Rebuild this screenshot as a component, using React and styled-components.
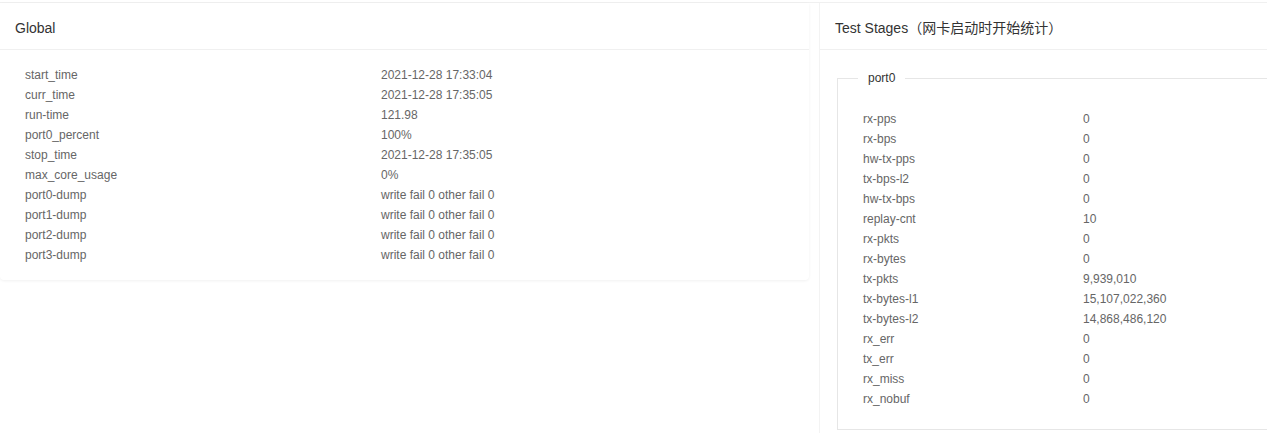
import styled, { createGlobalStyle } from "styled-components";

const globalRows = [
  ["start_time", "2021-12-28 17:33:04"],
  ["curr_time", "2021-12-28 17:35:05"],
  ["run-time", "121.98"],
  ["port0_percent", "100%"],
  ["stop_time", "2021-12-28 17:35:05"],
  ["max_core_usage", "0%"],
  ["port0-dump", "write fail 0 other fail 0"],
  ["port1-dump", "write fail 0 other fail 0"],
  ["port2-dump", "write fail 0 other fail 0"],
  ["port3-dump", "write fail 0 other fail 0"],
];

const portRows = [
  ["rx-pps", "0"],
  ["rx-bps", "0"],
  ["hw-tx-pps", "0"],
  ["tx-bps-l2", "0"],
  ["hw-tx-bps", "0"],
  ["replay-cnt", "10"],
  ["rx-pkts", "0"],
  ["rx-bytes", "0"],
  ["tx-pkts", "9,939,010"],
  ["tx-bytes-l1", "15,107,022,360"],
  ["tx-bytes-l2", "14,868,486,120"],
  ["rx_err", "0"],
  ["tx_err", "0"],
  ["rx_miss", "0"],
  ["rx_nobuf", "0"],
];

const App = () => {
  return (
    <>
      <GlobalStyle />
      <Page>
        <Row>
          <LeftCard>
            <CardHeader>Global</CardHeader>
            <LeftBody>
              {globalRows.map(([k, v]) => (
                <StatRow key={k} $labelWidth={356}>
                  <span>{k}</span>
                  <span>{v}</span>
                </StatRow>
              ))}
            </LeftBody>
          </LeftCard>

          <RightCard>
            <CardHeader>Test Stages（网卡启动时开始统计）</CardHeader>
            <RightBody>
              <PortSet>
                <PortLegend>port0</PortLegend>
                {portRows.map(([k, v]) => (
                  <StatRow key={k} $labelWidth={220}>
                    <span>{k}</span>
                    <span>{v}</span>
                  </StatRow>
                ))}
              </PortSet>
            </RightBody>
          </RightCard>
        </Row>
      </Page>
    </>
  );
};

export default App;

const GlobalStyle = createGlobalStyle`
  html, body {
    margin: 0;
    padding: 0;
    background: #fff;
    overflow: hidden;
  }
  body {
    font-family: "Liberation Sans", Arial, "Noto Sans CJK SC", sans-serif;
    font-size: 12px;
    color: #666;
  }
`;

const Page = styled.div`
  width: 1267px;
  height: 433px;
  overflow: hidden;
  padding-top: 2px;
  box-sizing: border-box;
`;

const Row = styled.div`
  display: flex;
  align-items: flex-start;
  gap: 10px;
  border-top: 1px solid #f0f0f0;
  width: 1400px;
`;

const LeftCard = styled.div`
  flex: 0 0 809px;
  height: 277px;
  background: #fff;
  border-radius: 0 0 4px 4px;
  box-shadow: 0 1px 3px rgba(0, 0, 0, 0.06);
`;

const RightCard = styled.div`
  flex: 0 0 560px;
  height: 440px;
  background: #fff;
  border-left: 1px solid #f3f3f3;
`;

const CardHeader = styled.div`
  height: 42px;
  line-height: 42px;
  padding: 4px 15px 0;
  font-size: 14px;
  color: #333;
  border-bottom: 1px solid #f0f0f0;
  white-space: nowrap;
`;

const LeftBody = styled.div`
  padding: 15px 25px;
`;

const RightBody = styled.div`
  padding: 20px 0 0 17px;
`;

const StatRow = styled.div`
  display: grid;
  grid-template-columns: ${(p) => p.$labelWidth}px 1fr;
  height: 20px;
  line-height: 20px;
  color: #666;
  white-space: nowrap;
`;

const PortSet = styled.fieldset`
  margin: 0;
  padding: 23px 25px 20px;
  border: 1px solid #e6e6e6;
  min-inline-size: 0;
`;

const PortLegend = styled.legend`
  margin-left: -5px;
  padding: 0 10px;
  font-size: 12px;
  color: #333;
  line-height: 16px;
`;
